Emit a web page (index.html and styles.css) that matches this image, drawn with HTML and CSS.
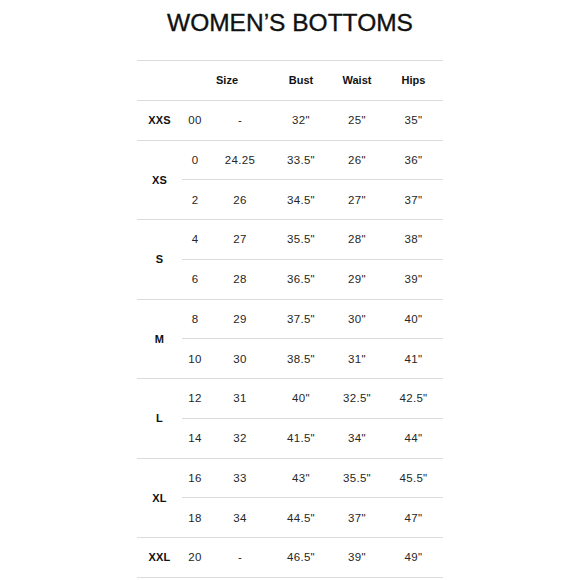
FILE: index.html
```html
<!DOCTYPE html>
<html>
<head>
<meta charset="utf-8">
<link rel="stylesheet" href="styles.css">
</head>
<body>
<h1 class="title">WOMEN’S BOTTOMS</h1>
<table class="chart">
  <colgroup>
    <col class="c-label"><col class="c-num"><col class="c-size"><col class="c-bust"><col class="c-waist"><col class="c-hips">
  </colgroup>
  <thead>
    <tr class="row">
      <th></th>
      <th colspan="2">Size</th>
      <th>Bust</th>
      <th>Waist</th>
      <th>Hips</th>
    </tr>
  </thead>
  <tbody>
    <tr class="row"><th class="lbl">XXS</th><td class="num">00</td><td>-</td><td>32"</td><td>25"</td><td>35"</td></tr>
    <tr class="row"><th class="lbl" rowspan="2">XS</th><td class="num">0</td><td>24.25</td><td>33.5"</td><td>26"</td><td>36"</td></tr>
    <tr class="row"><td class="num">2</td><td>26</td><td>34.5"</td><td>27"</td><td>37"</td></tr>
    <tr class="row"><th class="lbl" rowspan="2">S</th><td class="num">4</td><td>27</td><td>35.5"</td><td>28"</td><td>38"</td></tr>
    <tr class="row"><td class="num">6</td><td>28</td><td>36.5"</td><td>29"</td><td>39"</td></tr>
    <tr class="row"><th class="lbl" rowspan="2">M</th><td class="num">8</td><td>29</td><td>37.5"</td><td>30"</td><td>40"</td></tr>
    <tr class="row"><td class="num">10</td><td>30</td><td>38.5"</td><td>31"</td><td>41"</td></tr>
    <tr class="row"><th class="lbl" rowspan="2">L</th><td class="num">12</td><td>31</td><td>40"</td><td>32.5"</td><td>42.5"</td></tr>
    <tr class="row"><td class="num">14</td><td>32</td><td>41.5"</td><td>34"</td><td>44"</td></tr>
    <tr class="row"><th class="lbl" rowspan="2">XL</th><td class="num">16</td><td>33</td><td>43"</td><td>35.5"</td><td>45.5"</td></tr>
    <tr class="row"><td class="num">18</td><td>34</td><td>44.5"</td><td>37"</td><td>47"</td></tr>
    <tr class="row"><th class="lbl">XXL</th><td class="num">20</td><td>-</td><td>46.5"</td><td>39"</td><td>49"</td></tr>
  </tbody>
</table>
</body>
</html>
```
FILE: styles.css
```css
html, body {
  margin: 0;
  padding: 0;
  background: #ffffff;
}
body {
  font-family: "Liberation Sans", Arial, sans-serif;
  color: #262626;
}
.title {
  margin: 9px 0 0 0;
  height: 28px;
  line-height: 28px;
  font-size: 24.5px;
  font-weight: normal;
  text-align: center;
  color: #111111;
  -webkit-text-stroke: 0.35px #111111;
}
.chart {
  margin: 23px auto 0 auto;
  width: 306px;
  border-collapse: collapse;
  table-layout: fixed;
  font-size: 11.5px;
  letter-spacing: 0.3px;
}
.c-label { width: 45px; }
.c-num { width: 26px; }
.c-size { width: 64px; }
.c-bust { width: 58px; }
.c-waist { width: 54px; }
.c-hips { width: 59px; }
.chart tr.row {
  height: 39.75px;
}
.chart th,
.chart td {
  padding: 0;
  text-align: center;
  vertical-align: middle;
  border-top: 1px solid #dcdcdc;
  border-bottom: 1px solid #dcdcdc;
}
.chart thead th {
  font-size: 11px;
  letter-spacing: 0;
  font-weight: bold;
  color: #111111;
}
.chart th.lbl {
  font-size: 11px;
  letter-spacing: 0.2px;
  font-weight: bold;
  color: #111111;
}
```
